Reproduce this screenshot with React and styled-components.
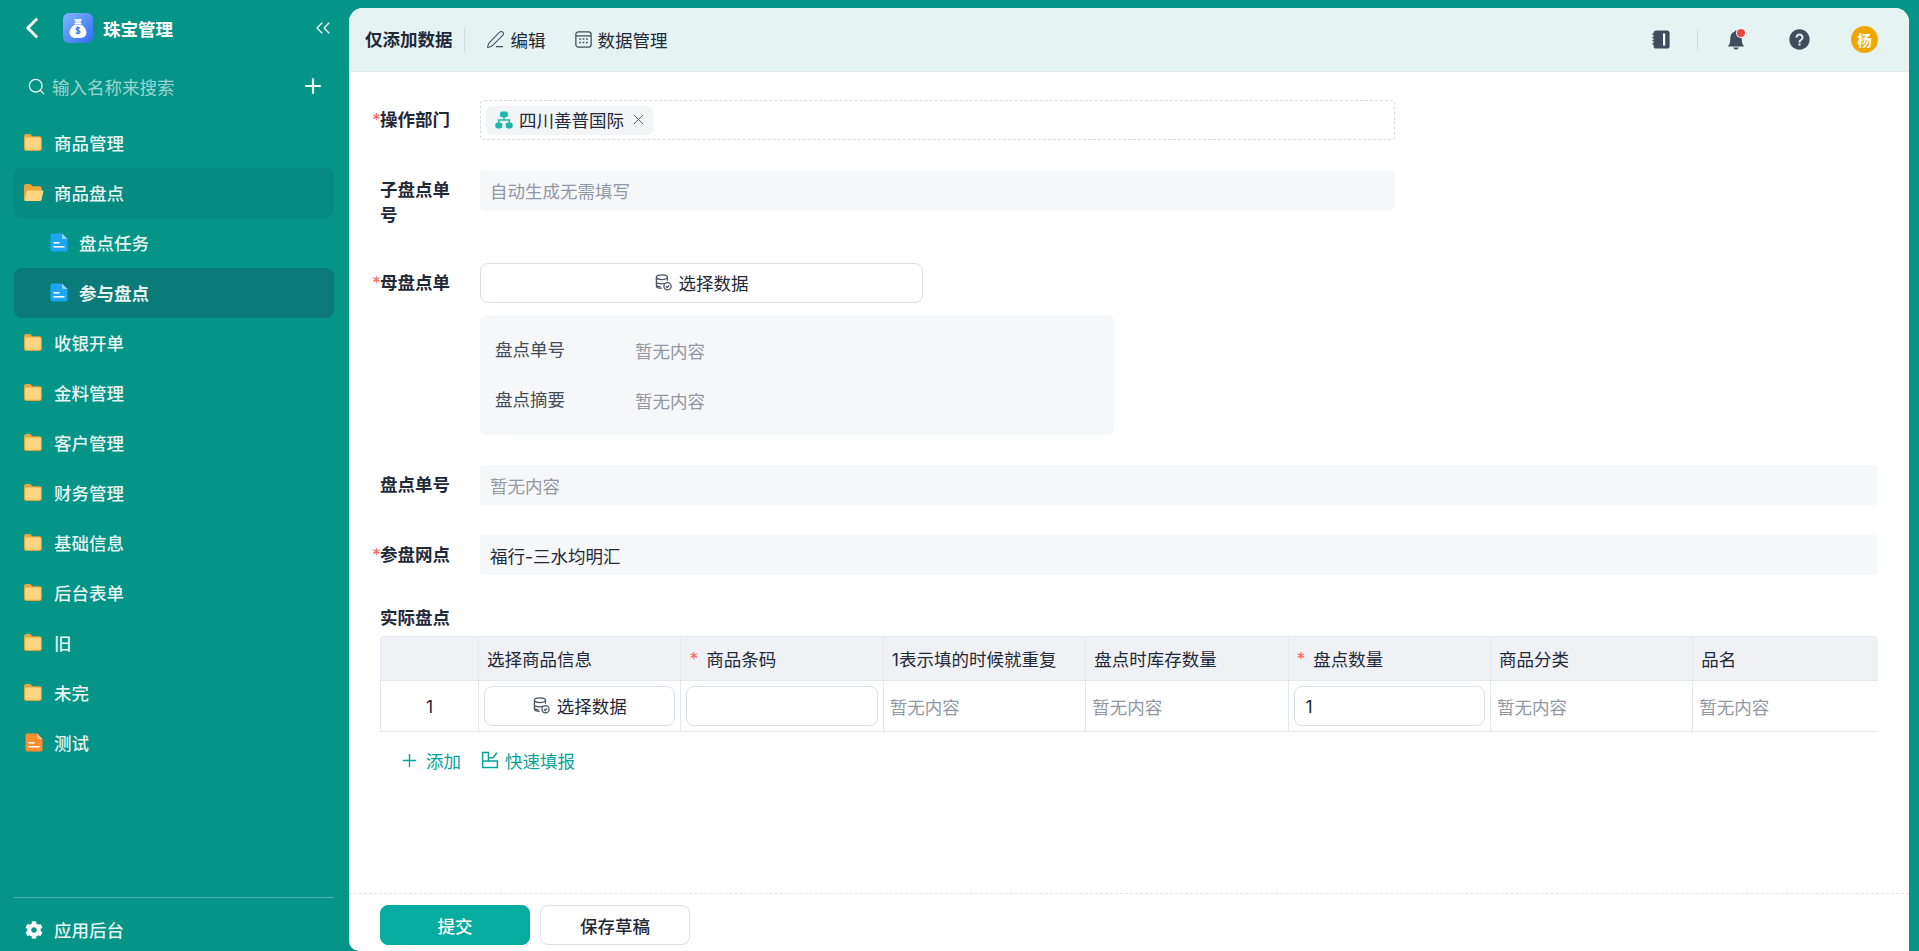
import styled, { createGlobalStyle } from "styled-components";
import { ChevronLeft, ChevronsLeft, Search, Plus, PenLine, X } from "lucide-react";
import { FaCog } from "react-icons/fa";
import { IoMdHelpCircle } from "react-icons/io";

const Global = createGlobalStyle`
  * { box-sizing: border-box; }
  html, body { margin: 0; height: 100%; }
  body {
    font-family: Inter, "Noto Sans CJK SC", "Noto Sans", sans-serif;
    font-size: 17.5px;
    color: #1f2937;
    overflow: hidden;
  }
`;

const Page = styled.div`
  display: flex;
  height: 100vh;
  background: #049488;
  padding: 8px 10px 0 0;
`;

const Sidebar = styled.aside`
  width: 349px;
  flex: none;
  margin-top: -8px;
  display: flex;
  flex-direction: column;
  color: rgba(255, 255, 255, 0.92);
`;

const Brand = styled.div`
  height: 56px;
  display: flex;
  align-items: center;
  padding: 0 14px 0 15px;
  color: #fff;
`;

const BrandName = styled.span`
  font-weight: 700;
  font-size: 17.5px;
  margin-left: 10px;
  flex: 1;
`;

const Logo = styled.div`
  width: 30px;
  height: 30px;
  margin-left: 14px;
  border-radius: 6px;
  background: linear-gradient(135deg, #84b4ff, #2f6df0);
  display: flex;
  align-items: center;
  justify-content: center;
`;

const SearchRow = styled.div`
  height: 46px;
  margin: 7px 0 9px;
  display: flex;
  align-items: center;
  padding: 0 24px 0 27px;
`;

const SearchText = styled.span`
  flex: 1;
  margin-left: 6px;
  color: rgba(255, 255, 255, 0.62);
`;

const Nav = styled.nav`
  flex: 1;
  padding: 0 15px 0 14px;
`;

const NavItem = styled.div`
  height: 50px;
  display: flex;
  align-items: center;
  gap: ${({ $sub }) => ($sub ? "11px" : "9px")};
  padding: 0 0 2px ${({ $sub }) => ($sub ? "36px" : "10px")};
  border-radius: 8px;
  font-weight: ${({ $active }) => ($active ? 700 : 500)};
  background: ${({ $active, $open }) =>
    $active ? "#0a7b78" : $open ? "#068b80" : "transparent"};
`;

const SideFoot = styled.div`
  margin: 0 15px 0 14px;
  height: 54px;
  border-top: 1px solid rgba(255, 255, 255, 0.3);
  display: flex;
  align-items: center;
  gap: 11px;
  padding: 10px 0 0 11px;
  font-weight: 500;
`;

const Main = styled.main`
  flex: 1;
  min-width: 0;
  background: #fff;
  border-radius: 14px 14px 0 10px;
  display: flex;
  flex-direction: column;
  overflow: hidden;
`;

const TopBar = styled.header`
  height: 64px;
  flex: none;
  background: #e5f3f2;
  border-bottom: 1px solid #e1e6ea;
  display: flex;
  align-items: center;
  padding: 0 31px 0 16px;
`;

const PageTitle = styled.span`
  font-weight: 700;
  padding-right: 11px;
  margin-right: 21px;
  border-right: 1px solid #d3dcdf;
  line-height: 24px;
`;

const TopLink = styled.span`
  display: flex;
  align-items: center;
  gap: 6px;
  margin-right: 29px;
`;

const TopRight = styled.div`
  margin-left: auto;
  display: flex;
  align-items: center;
  color: #414d5c;
`;

const TopDivider = styled.span`
  width: 1px;
  height: 20px;
  background: #d3dcdf;
  margin: 0 30px 0 27px;
`;

const BellWrap = styled.span`
  position: relative;
  display: flex;
  margin-right: 43px;
`;

const BellDot = styled.i`
  position: absolute;
  top: -1px;
  right: -1px;
  width: 8px;
  height: 8px;
  border-radius: 50%;
  background: #ef4444;
  box-shadow: 0 0 0 1px #fff;
`;

const Avatar = styled.span`
  width: 27px;
  height: 27px;
  margin-left: 39px;
  border-radius: 50%;
  background: #f0a600;
  color: #fff;
  font-size: 14.5px;
  font-weight: 700;
  display: flex;
  align-items: center;
  justify-content: center;
`;

const Form = styled.div`
  flex: 1;
  min-height: 0;
  padding: 28px 31px 0;
`;

const Row = styled.div`
  display: flex;
  margin-bottom: 30px;
`;

const Label = styled.div`
  width: 100px;
  flex: none;
  padding: 7px 22px 6px 0;
  line-height: 25px;
  font-weight: 700;
`;

const Star = styled.span`
  display: inline-block;
  width: 8px;
  margin-left: -8px;
  color: #f66;
  font-weight: 400;
`;

const Field = styled.div`
  width: ${({ $wide }) => ($wide ? "1398px" : "915px")};
  height: 40px;
  padding: 0 10px;
  display: flex;
  align-items: center;
  background: #f6f7f9;
  border-radius: 4px;
  color: ${({ $filled }) => ($filled ? "#1f2937" : "#9298a3")};
`;

const TagField = styled.div`
  width: 915px;
  height: 40px;
  padding: 0 5px;
  display: flex;
  align-items: center;
  border: 1px dashed #d8dce5;
  border-radius: 4px;
`;

const Tag = styled.span`
  height: 29px;
  display: flex;
  align-items: center;
  gap: 6px;
  padding: 0 6px 1px 9px;
  border-radius: 6px;
  background: #f3f4f6;
`;

const Stack = styled.div`
  display: flex;
  flex-direction: column;
  gap: 12px;
`;

const PickButton = styled.button`
  width: ${({ $w }) => $w || "100%"};
  height: 40px;
  background: #fff;
  border: 1px solid #dcdfe8;
  border-radius: 8px;
  font: inherit;
  color: #1f2937;
  display: flex;
  align-items: center;
  justify-content: center;
  gap: 7px;
  padding: 0 0 2px;
`;

const InfoPanel = styled.div`
  width: 634px;
  height: 120px;
  padding: 10px 15px;
  background: #f6f7f9;
  border-radius: 6px;
`;

const InfoRow = styled.div`
  height: 50px;
  display: flex;
  align-items: center;
`;

const InfoKey = styled.span`
  width: 140px;
  color: #414b59;
  margin-top: -4px;
`;

const Muted = styled.span`
  color: #9298a3;
`;

const SectionTitle = styled.div`
  line-height: 25px;
  margin-bottom: 6px;
  font-weight: 700;
`;

const Table = styled.div`
  width: 1498px;
  overflow: hidden;
  border-radius: 4px 4px 0 0;
`;

const GridRow = styled.div`
  display: grid;
  grid-template-columns: 98px repeat(7, 202.4px);
  grid-template-rows: 1fr;
  height: ${({ $head }) => ($head ? "45px" : "51px")};
  background: ${({ $head }) => ($head ? "#f0f1f5" : "#fff")};
  border-top: ${({ $head }) => ($head ? "1px solid #e5e7ee" : "0")};
  border-bottom: 1px solid #e5e7ee;
`;

const Cell = styled.div`
  display: flex;
  align-items: center;
  justify-content: ${({ $center }) => ($center ? "center" : "flex-start")};
  padding: 0 ${({ $pad }) => $pad || "8px"};
  border-left: 1px solid #e5e7ee;
  min-width: 0;
  white-space: nowrap;
  overflow: hidden;
`;

const ReqMark = styled.span`
  color: #f66;
  margin-right: 8px;
`;

const CellInput = styled.input`
  width: 100%;
  height: 40px;
  border: 1px solid #dcdfe8;
  border-radius: 8px;
  padding: 0 11px;
  font: inherit;
  color: #1f2937;
  outline: none;
`;

const AddRow = styled.div`
  height: 30px;
  margin: 13px 0 0 19px;
  display: flex;
  align-items: center;
  gap: 20px;
  color: #06a398;
`;

const AddLink = styled.span`
  display: flex;
  align-items: center;
  gap: 6px;
`;

const Footer = styled.footer`
  height: 58px;
  flex: none;
  border-top: 1px dashed #e2e5ea;
  padding: 11px 31px 0;
  display: flex;
  gap: 10px;
`;

const SubmitButton = styled.button`
  width: 150px;
  height: 40px;
  border-radius: 8px;
  font: inherit;
  font-weight: 500;
  border: 1px solid ${({ $primary }) => ($primary ? "#05ac9f" : "#dcdfe8")};
  background: ${({ $primary }) => ($primary ? "#05ac9f" : "#fff")};
  color: ${({ $primary }) => ($primary ? "#fff" : "#1f2937")};
`;

const FolderIcon = ({ open }) => (
  <svg width="21" height="19" viewBox="1 0 20 18">
    <path d="M1 3a2 2 0 0 1 2-2h4l2 2h7a2 2 0 0 1 2 2v10a2 2 0 0 1-2 2H3a2 2 0 0 1-2-2z" fill="#e6a63c" />
    {open ? (
      <path d="M4.5 7h14a1 1 0 0 1 1 1.3l-2 7.5a1.6 1.6 0 0 1-1.6 1.2H2.5a1 1 0 0 1-1-1.3l2-7.6A1.2 1.2 0 0 1 4.5 7z" fill="#ffd67f" />
    ) : (
      <rect x="2" y="4.2" width="15" height="11.8" rx="1.4" fill="#ffd67f" />
    )}
  </svg>
);

const DocIcon = ({ color = "#1ca5f3", fold = "#8fd3fb", top }) => (
  <svg width={top ? 21 : 18} height="19" viewBox={top ? "-1 0 21 19" : "0 0 18 19"}>
    <path d="M2.5 0.5H12l5.5 5.5v10.5a2 2 0 0 1-2 2h-13a2 2 0 0 1-2-2v-14a2 2 0 0 1 2-2z" fill={color} />
    <path d="M12 0.5l5.5 5.5H13a1 1 0 0 1-1-1z" fill={fold} />
    <rect x="3.5" y="9" width="6" height="1.6" fill="#fff" />
    <rect x="3.5" y="13" width="11" height="1.6" fill="#fff" />
  </svg>
);

const MoneyBag = () => (
  <svg width="18" height="21" viewBox="0 0 18 21">
    <path d="M5 1h8l-1.6 3.4H6.6z" fill="#e8efff" />
    <rect x="5.6" y="4.6" width="6.8" height="1.4" fill="#fff" />
    <path d="M6 6.6h6c3 1.6 5.4 5 5.4 8 0 3.4-2.6 5.4-5.4 5.4H6c-2.8 0-5.4-2-5.4-5.4 0-3 2.4-6.4 5.4-8z" fill="#fff" />
    <path d="M11 10.6c-.4-.7-1.1-1-2-1-1.1 0-1.9.6-1.9 1.5 0 2 4 1 4 3 0 .9-.9 1.5-2.1 1.5-1 0-1.8-.4-2.2-1.1M9 8.6v8" fill="none" stroke="#2f6df0" strokeWidth="1.1" />
  </svg>
);

const GridCalendar = () => (
  <svg width="17" height="17" viewBox="0 0 16 16" fill="none" stroke="#414d5c" strokeWidth="1.2">
    <rect x="0.8" y="0.8" width="14.4" height="14.4" rx="2.4" />
    <path d="M1 4.5h14" />
    <path d="M4 7.6h1.6M7.2 7.6h1.6M10.4 7.6H12M4 10.8h1.6M7.2 10.8h1.6M10.4 10.8H12" strokeWidth="1.4" />
  </svg>
);

const DbCheck = () => (
  <svg width="17" height="17" viewBox="0 0 16 16" fill="none" stroke="#4b5563" strokeWidth="1.2">
    <ellipse cx="6.5" cy="3" rx="5.2" ry="2.2" />
    <path d="M1.3 3v8.4c0 1.2 2.3 2.2 5 2.2M1.3 7c0 1.2 2.3 2.2 5.2 2.2 1 0 1.9-.1 2.7-.4M11.7 3v3.4M1.3 10.2c0 .8 1.4 1.6 4 1.9" />
    <circle cx="11.8" cy="11.6" r="3.4" />
    <path d="M10.3 11.6l1.1 1.1 1.9-1.9" />
  </svg>
);

const OrgIcon = () => (
  <svg width="18" height="18" viewBox="0 0 16 16" fill="#1db9aa">
    <rect x="4.5" y="0.5" width="7" height="5" rx="1.6" />
    <path d="M8 5v3M3.3 10.5V8h9.4v2.5" fill="none" stroke="#1db9aa" strokeWidth="1.3" />
    <rect x="0.2" y="10.3" width="6.4" height="5.2" rx="2.2" />
    <rect x="9.4" y="10.3" width="6.4" height="5.2" rx="2.2" />
  </svg>
);

const NotebookIcon = () => (
  <svg width="18" height="19" viewBox="0 0 18 19">
    <rect x="1.6" y="0.5" width="16" height="18" rx="2.6" fill="#414d5c" />
    <rect x="11" y="3.4" width="2.2" height="12.2" fill="#fff" />
    <path d="M0.4 4.2h2.6M0.4 7.4h2.6M0.4 10.6h2.6M0.4 13.8h2.6" stroke="#414d5c" strokeWidth="1.5" />
  </svg>
);

const BellIcon = () => (
  <svg width="16" height="20" viewBox="0 0 16 20" fill="#414d5c">
    <path d="M8 0.5c.8 0 1.3.5 1.4 1.2C12 2.4 13.4 4.6 13.6 7.400l.5 5.600L16 16.500H0L1.900 13l.5-5.600C2.600 4.600 4 2.400 6.600 1.700 6.700 1 7.200.5 8 .5z" />
    <path d="M5.400 17.500h5.200C10.300 18.800 9.300 19.600 8 19.600s-2.300-.8-2.600-2.100z" />
  </svg>
);

const QuickFill = () => (
  <svg width="18" height="18" viewBox="0 0 17 17" fill="none" stroke="#06a398" strokeWidth="1.4">
    <path d="M1.500 1.500H7V9.500H15.500V15.500H1.500Z" />
    <path d="M1.500 9.500H7" />
    <path d="M7 6.300h4.300l3.700-4.600" />
  </svg>
);

const menu = ["收银开单", "金料管理", "客户管理", "财务管理", "基础信息", "后台表单", "旧", "未完"];
const headers = [
  { text: "" },
  { text: "选择商品信息" },
  { text: "商品条码", required: true },
  { text: "1表示填的时候就重复" },
  { text: "盘点时库存数量" },
  { text: "盘点数量", required: true },
  { text: "商品分类" },
  { text: "品名" },
];

const App = () => {
  return (
    <Page>
      <Global />
      <Sidebar>
        <Brand>
          <ChevronLeft size={34} strokeWidth={2.1} />
          <Logo>
            <MoneyBag />
          </Logo>
          <BrandName>珠宝管理</BrandName>
          <ChevronsLeft size={24} strokeWidth={1.3} />
        </Brand>
        <SearchRow>
          <Search size={19} strokeWidth={1.7} />
          <SearchText>输入名称来搜索</SearchText>
          <Plus size={24} strokeWidth={2.2} />
        </SearchRow>
        <Nav>
          <NavItem>
            <FolderIcon />
            商品管理
          </NavItem>
          <NavItem $open>
            <FolderIcon open />
            商品盘点
          </NavItem>
          <NavItem $sub>
            <DocIcon />
            盘点任务
          </NavItem>
          <NavItem $sub $active>
            <DocIcon />
            参与盘点
          </NavItem>
          {menu.map((name) => (
            <NavItem key={name}>
              <FolderIcon />
              {name}
            </NavItem>
          ))}
          <NavItem>
            <DocIcon top color="#ff8d2b" fold="#ffc58f" />
            测试
          </NavItem>
        </Nav>
        <SideFoot>
          <FaCog size={18} color="#fff" />
          应用后台
        </SideFoot>
      </Sidebar>

      <Main>
        <TopBar>
          <PageTitle>仅添加数据</PageTitle>
          <TopLink>
            <PenLine size={19} strokeWidth={1.3} color="#414d5c" />
            编辑
          </TopLink>
          <TopLink>
            <GridCalendar />
            数据管理
          </TopLink>
          <TopRight>
            <NotebookIcon />
            <TopDivider />
            <BellWrap>
              <BellIcon />
              <BellDot />
            </BellWrap>
            <IoMdHelpCircle size={25} />
            <Avatar>杨</Avatar>
          </TopRight>
        </TopBar>

        <Form>
          <Row>
            <Label>
              <Star>*</Star>操作部门
            </Label>
            <TagField>
              <Tag>
                <OrgIcon />
                四川善普国际
                <X size={17} strokeWidth={1.3} color="#4b5563" />
              </Tag>
            </TagField>
          </Row>
          <Row>
            <Label>子盘点单号</Label>
            <Field>自动生成无需填写</Field>
          </Row>
          <Row>
            <Label>
              <Star>*</Star>母盘点单
            </Label>
            <Stack>
              <PickButton $w="443px">
                <DbCheck />
                选择数据
              </PickButton>
              <InfoPanel>
                <InfoRow>
                  <InfoKey>盘点单号</InfoKey>
                  <Muted>暂无内容</Muted>
                </InfoRow>
                <InfoRow>
                  <InfoKey>盘点摘要</InfoKey>
                  <Muted>暂无内容</Muted>
                </InfoRow>
              </InfoPanel>
            </Stack>
          </Row>
          <Row>
            <Label>盘点单号</Label>
            <Field $wide>暂无内容</Field>
          </Row>
          <Row>
            <Label>
              <Star>*</Star>参盘网点
            </Label>
            <Field $wide $filled>
              福行-三水均明汇
            </Field>
          </Row>

          <SectionTitle>实际盘点</SectionTitle>
          <Table>
            <GridRow $head>
              {headers.map((h, i) => (
                <Cell key={i}>
                  {h.required && <ReqMark>*</ReqMark>}
                  {h.text}
                </Cell>
              ))}
            </GridRow>
            <GridRow>
              <Cell $center>1</Cell>
              <Cell $pad="5px">
                <PickButton>
                  <DbCheck />
                  选择数据
                </PickButton>
              </Cell>
              <Cell $pad="5px">
                <CellInput aria-label="商品条码" />
              </Cell>
              <Cell $pad="6px">
                <Muted>暂无内容</Muted>
              </Cell>
              <Cell $pad="6px">
                <Muted>暂无内容</Muted>
              </Cell>
              <Cell $pad="5px">
                <CellInput aria-label="盘点数量" defaultValue="1" />
              </Cell>
              <Cell $pad="6px">
                <Muted>暂无内容</Muted>
              </Cell>
              <Cell $pad="6px">
                <Muted>暂无内容</Muted>
              </Cell>
            </GridRow>
          </Table>
          <AddRow>
            <AddLink>
              <Plus size={21} strokeWidth={1.6} />
              添加
            </AddLink>
            <AddLink>
              <QuickFill />
              快速填报
            </AddLink>
          </AddRow>
        </Form>

        <Footer>
          <SubmitButton $primary>提交</SubmitButton>
          <SubmitButton>保存草稿</SubmitButton>
        </Footer>
      </Main>
    </Page>
  );
};

export default App;
